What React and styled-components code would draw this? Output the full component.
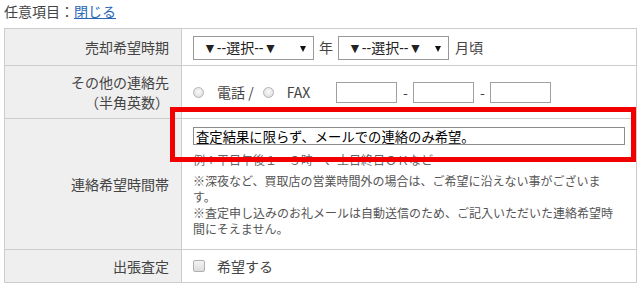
import React from "react";
import styled, { createGlobalStyle } from "styled-components";

const Global = createGlobalStyle`
  * { box-sizing: border-box; }
  body {
    margin: 0;
    background: #fff;
    font-family: "Noto Sans CJK JP", "Noto Sans", sans-serif;
    color: #444;
  }
`;

const Frame = styled.div`
  position: relative;
  width: 640px;
  height: 286px;
  padding-left: 4px;
`;

const Header = styled.div`
  height: 28px;
  padding-top: 1px;
  font-size: 14px;
  line-height: 20px;
  color: #444;
`;

const Link = styled.a`
  color: #2a67b8;
  text-decoration: underline;
  cursor: pointer;
`;

const Table = styled.div`
  width: 633px;
  border: 1px solid #ccc;
  border-bottom: none;
`;

const Row = styled.div`
  display: grid;
  grid-template-columns: 177px 1fr;
  height: ${(p) => p.$h}px;
  border-bottom: 1px solid #ccc;
`;

const Label = styled.div`
  background: #efefef;
  border-right: 1px solid #ccc;
  display: flex;
  flex-direction: column;
  align-items: flex-end;
  justify-content: center;
  padding-right: 12px;
  font-size: 14px;
  line-height: 20px;
  color: #444;
  text-align: right;
`;

const Value = styled.div`
  display: flex;
  align-items: center;
  padding: 0 11px;
  font-size: 14px;
  line-height: 18px;
  color: #444;
`;

const StackValue = styled.div`
  display: flex;
  flex-direction: column;
  padding: 8px 11px 12px;
`;

const SelectBox = styled.div`
  position: relative;
  width: ${(p) => p.$w}px;
  height: 24px;
  margin-top: 2px;
`;

const Select = styled.select`
  appearance: none;
  -webkit-appearance: none;
  width: 100%;
  height: 100%;
  border: 1px solid #999;
  border-radius: 0;
  background: #fff;
  padding: 0 0 0 9px;
  font: 14px "Liberation Sans", "Noto Sans CJK JP", sans-serif;
  color: #222;
  outline: none;
`;

const Caret = styled.span`
  position: absolute;
  right: 8px;
  top: 10px;
  width: 0;
  height: 0;
  border-left: 3px solid transparent;
  border-right: 3px solid transparent;
  border-top: 6px solid #111;
  pointer-events: none;
`;

const Unit = styled.span`
  margin: 0 ${(p) => p.$r ?? 5}px 0 ${(p) => p.$l ?? 5}px;
  white-space: nowrap;
`;

const Radio = styled.input.attrs({ type: "radio" })`
  appearance: none;
  -webkit-appearance: none;
  width: 11px;
  height: 11px;
  margin: 0 ${(p) => p.$gap}px 0 0;
  border: 1px solid #b4b4b4;
  border-radius: 50%;
  background: radial-gradient(circle at 50% 40%, #fafafa 0%, #e6e6e6 60%, #d4d4d4 100%);
  flex: none;
`;

const Check = styled.input.attrs({ type: "checkbox" })`
  appearance: none;
  -webkit-appearance: none;
  width: 12px;
  height: 12px;
  margin: 0 12px 0 0;
  border: 1px solid #b0b0b0;
  border-radius: 2px;
  background: linear-gradient(#f4f4f4, #dcdcdc);
  flex: none;
`;

const Choice = styled.label`
  display: flex;
  align-items: center;
  margin-right: ${(p) => p.$mr}px;
  white-space: nowrap;
`;

const Small = styled.input.attrs({ type: "text" })`
  width: 61px;
  height: 21px;
  border: 1px solid #a0a0a0;
  padding: 0 2px;
  font: 13.33px "Noto Sans CJK JP", sans-serif;
  outline: none;
  flex: none;
`;

const Dash = styled.span`
  width: 16px;
  text-align: center;
  flex: none;
`;

const Wide = styled.input.attrs({ type: "text" })`
  width: 100%;
  height: 18px;
  border: 1px solid #8c8c8c;
  padding: 0 2px;
  font: 13.33px "Noto Sans CJK JP", sans-serif;
  line-height: 16px;
  color: #000;
  outline: none;
`;

const Example = styled.div`
  margin-top: 7px;
  font-size: 12px;
  line-height: 16px;
  color: #666;
`;

const Notes = styled.div`
  width: 424px;
  margin-top: 5px;
  font-size: 12px;
  line-height: 16px;
  color: #555;
`;

const Highlight = styled.div`
  position: absolute;
  left: 170px;
  top: 107px;
  width: 466px;
  height: 55px;
  border: 5px solid #f20000;
  pointer-events: none;
`;

function Picker({ w, options }) {
  return (
    <SelectBox $w={w}>
      <Select defaultValue="">
        <option value="">▼--選択--▼</option>
        {options.map((o) => (
          <option key={o} value={o}>
            {o}
          </option>
        ))}
      </Select>
      <Caret />
    </SelectBox>
  );
}

export default function App() {
  return (
    <>
      <Global />
      <Frame>
        <Header>
          任意項目：<Link>閉じる</Link>
        </Header>
        <Table>
          <Row $h={37}>
            <Label>売却希望時期</Label>
            <Value>
              <Picker w={121} options={["2025", "2026", "2027"]} />
              <Unit $l={5} $r={5}>年</Unit>
              <Picker w={111} options={["1", "2", "3", "4", "5", "6", "7", "8", "9", "10", "11", "12"]} />
              <Unit $l={6} $r={0}>月頃</Unit>
            </Value>
          </Row>
          <Row $h={53}>
            <Label>
              <span>その他の連絡先</span>
              <span>（半角英数）</span>
            </Label>
            <Value>
              <Choice $mr={9}>
                <Radio name="contact" $gap={13} />
                電話 /
              </Choice>
              <Choice $mr={26}>
                <Radio name="contact" $gap={13} />
                FAX
              </Choice>
              <Small />
              <Dash>-</Dash>
              <Small />
              <Dash>-</Dash>
              <Small />
            </Value>
          </Row>
          <Row $h={131}>
            <Label>連絡希望時間帯</Label>
            <StackValue>
              <Wide defaultValue="査定結果に限らず、メールでの連絡のみ希望。" />
              <Example>例：平日午後１～３時～、土日終日ＯＫなど</Example>
              <Notes>
                ※深夜など、買取店の営業時間外の場合は、ご希望に沿えない事がございます。
                <br />
                ※査定申し込みのお礼メールは自動送信のため、ご記入いただいた連絡希望時間にそえません。
              </Notes>
            </StackValue>
          </Row>
          <Row $h={33}>
            <Label>出張査定</Label>
            <Value>
              <Choice $mr={0}>
                <Check />
                希望する
              </Choice>
            </Value>
          </Row>
        </Table>
        <Highlight />
      </Frame>
    </>
  );
}
